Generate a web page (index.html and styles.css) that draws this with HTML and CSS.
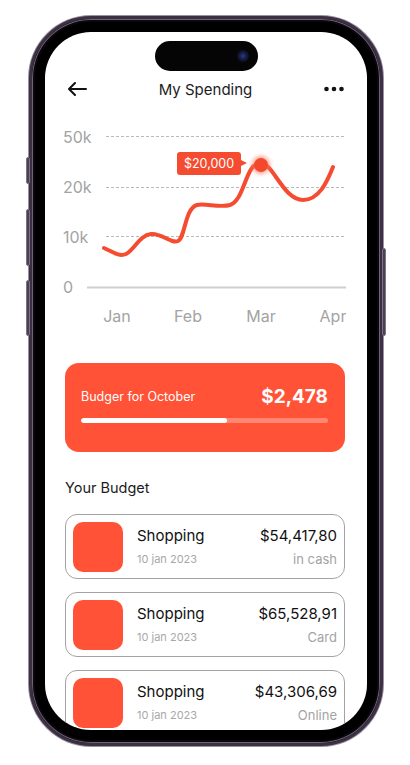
FILE: index.html
```html
<!DOCTYPE html>
<html lang="en">
<head>
<meta charset="utf-8">
<title>My Spending</title>
<link rel="stylesheet" href="styles.css">
</head>
<body>
<div class="stage">
  <div class="phone">
    <span class="btn btn-l1"></span>
    <span class="btn btn-l2"></span>
    <span class="btn btn-l3"></span>
    <span class="btn btn-r1"></span>
    <div class="screen">
      <div class="island"><span class="camera"></span></div>
      <div class="content">
        <header class="topbar">
          <svg class="icon-back" width="20" height="14" viewBox="0 0 20 14" aria-hidden="true">
            <path d="M19 7H2M8 1L2 7l6 6" fill="none" stroke="#111" stroke-width="2" stroke-linecap="round" stroke-linejoin="round"/>
          </svg>
          <h1 class="title">My Spending</h1>
          <svg class="icon-more" width="20" height="6" viewBox="0 0 20 6" aria-hidden="true">
            <circle cx="2.5" cy="3" r="2.3" fill="#111"/>
            <circle cx="10" cy="3" r="2.3" fill="#111"/>
            <circle cx="17.5" cy="3" r="2.3" fill="#111"/>
          </svg>
        </header>

        <svg class="chart" width="301" height="215" viewBox="0 0 301 215">
          <defs>
            <filter id="glow" x="-100%" y="-100%" width="300%" height="300%">
              <feGaussianBlur stdDeviation="2.2"/>
            </filter>
          </defs>
          <g class="grid">
            <line x1="61" y1="16.5" x2="301" y2="16.5"/>
            <line x1="61" y1="67.5" x2="301" y2="67.5"/>
            <line x1="61" y1="116.5" x2="301" y2="116.5"/>
          </g>
          <line class="base" x1="42" y1="167.5" x2="301" y2="167.5"/>
          <g class="ylab">
            <text x="18" y="23">50k</text>
            <text x="18" y="73">20k</text>
            <text x="18" y="123">10k</text>
            <text x="18" y="173">0</text>
          </g>
          <g class="xlab">
            <text x="72" y="202">Jan</text>
            <text x="143" y="202">Feb</text>
            <text x="216" y="202">Mar</text>
            <text x="288" y="202">Apr</text>
          </g>
          <path class="curve" d="M59,128 C68,132 74,137 81,134 C89,130 95,115 106,114 C117,113 126,124 133,121 C140,118 140,88 152,85 C160,83 175,88 185,85 C200,80 200,44 215,43 C228,42 238,80 258,80 C274,80 282,62 288,47"/>
          <circle cx="216" cy="45" r="9" fill="#ff7a62" opacity="0.7" filter="url(#glow)"/>
          <circle cx="216" cy="45" r="7" fill="#f4482d"/>
          <path class="tip" d="M135,32 H193 a3,3 0 0 1 3,3 V40 L202,43 L196,46 V52 a3,3 0 0 1 -3,3 H135 a3,3 0 0 1 -3,-3 V35 a3,3 0 0 1 3,-3 Z"/>
          <text class="tiptext" x="164" y="48">$20,000</text>
        </svg>

        <section class="budget-card">
          <div class="budget-row">
            <span class="budget-label">Budger for October</span>
            <span class="budget-amount">$2,478</span>
          </div>
          <div class="bar"><div class="bar-fill" style="width:59%"></div></div>
        </section>

        <h2 class="section-title">Your Budget</h2>

        <ul class="list">
          <li class="item">
            <span class="thumb"></span>
            <div class="item-body">
              <div class="item-row">
                <span class="item-name">Shopping</span>
                <span class="item-amount">$54,417,80</span>
              </div>
              <div class="item-row sub">
                <span class="item-date">10 jan 2023</span>
                <span class="item-method">in cash</span>
              </div>
            </div>
          </li>
          <li class="item">
            <span class="thumb"></span>
            <div class="item-body">
              <div class="item-row">
                <span class="item-name">Shopping</span>
                <span class="item-amount">$65,528,91</span>
              </div>
              <div class="item-row sub">
                <span class="item-date">10 jan 2023</span>
                <span class="item-method">Card</span>
              </div>
            </div>
          </li>
          <li class="item">
            <span class="thumb"></span>
            <div class="item-body">
              <div class="item-row">
                <span class="item-name">Shopping</span>
                <span class="item-amount">$43,306,69</span>
              </div>
              <div class="item-row sub">
                <span class="item-date">10 jan 2023</span>
                <span class="item-method">Online</span>
              </div>
            </div>
          </li>
        </ul>
      </div>
    </div>
  </div>
</div>
</body>
</html>
```

FILE: styles.css
```css
* { box-sizing: border-box; }

html, body {
  margin: 0;
  padding: 0;
  background: #ffffff;
  font-family: Inter, "Noto Sans", "Liberation Sans", sans-serif;
  color: #111;
}

.stage {
  width: 410px;
  height: 765px;
  padding: 16px 0 0 29px;
  overflow: hidden;
}

.phone {
  position: relative;
  width: 354px;
  height: 730px;
  border-radius: 62px;
  background: #000;
  border: 3px solid #3b3143;
  box-shadow: 0 0 0 1px #9a90a3, inset 0 0 0 1px #6e6478, inset 0 0 0 3px #0b080d;
  padding: 13px;
}

.btn {
  position: absolute;
  width: 4px;
  background: #4a4052;
  border: 1px solid #7d7386;
  border-radius: 2px;
}
.btn-l1 { left: -6px; top: 138px; height: 27px; }
.btn-l2 { left: -6px; top: 190px; height: 57px; }
.btn-l3 { left: -6px; top: 261px; height: 56px; }
.btn-r1 { right: -6px; top: 229px; height: 88px; }

.screen {
  position: relative;
  width: 322px;
  height: 698px;
  border-radius: 46px;
  background: #fff;
  overflow: hidden;
}

.island {
  position: absolute;
  top: 9px;
  left: 110px;
  width: 103px;
  height: 30px;
  border-radius: 15px;
  background: #050505;
}
.camera {
  position: absolute;
  right: 9px;
  top: 9px;
  width: 12px;
  height: 12px;
  border-radius: 50%;
  background: radial-gradient(circle at 50% 50%, #2a3a8a 0, #18204a 35%, #0b0d1c 70%);
}

.content {
  padding: 46px 22px 0 20px;
}

.topbar {
  height: 22px;
  display: flex;
  align-items: center;
  justify-content: space-between;
  padding: 0 1px 0 2px;
}
.title {
  margin: 0;
  font-size: 15px;
  font-weight: 400;
  color: #1c1c1c;
}
.icon-back, .icon-more { display: block; }

.chart {
  display: block;
  margin: 20px 0 0 -20px;
  overflow: hidden;
  font-family: Inter, "Noto Sans", sans-serif;
}
.grid line {
  stroke: #b9b9b9;
  stroke-width: 1;
  stroke-dasharray: 3 2;
}
.base {
  stroke: #cfcfcf;
  stroke-width: 2;
}
.ylab text, .xlab text {
  font-size: 16px;
  fill: #a3a3a3;
}
.xlab text { text-anchor: middle; }
.curve {
  fill: none;
  stroke: #f54b30;
  stroke-width: 4;
  stroke-linecap: round;
  stroke-linejoin: round;
}
.tip { fill: #f54b30; }
.tiptext {
  font-size: 12.5px;
  fill: #fff;
  text-anchor: middle;
}

.budget-card {
  margin-top: 28px;
  height: 89px;
  border-radius: 14px;
  background: #ff5236;
  padding: 21px 17px 0 16px;
  color: #fff;
}
.budget-row {
  height: 24px;
  display: flex;
  align-items: center;
  justify-content: space-between;
}
.budget-label {
  font-size: 12.5px;
  font-weight: 400;
}
.budget-amount {
  font-size: 19px;
  font-weight: 700;
}
.bar {
  margin-top: 10px;
  height: 5px;
  border-radius: 3px;
  background: rgba(255, 255, 255, 0.3);
  overflow: hidden;
}
.bar-fill {
  height: 100%;
  border-radius: 3px;
  background: #fff;
}

.section-title {
  margin: 26px 0 0 0;
  font-size: 14.5px;
  line-height: 20px;
  font-weight: 400;
  color: #1c1c1c;
}

.list {
  list-style: none;
  margin: 16px 0 0 0;
  padding: 0;
  display: flex;
  flex-direction: column;
  gap: 13px;
}
.item {
  height: 65px;
  border: 1px solid #a3a3a3;
  border-radius: 12px;
  padding: 7px;
  display: flex;
  align-items: center;
  gap: 14px;
}
.thumb {
  flex: none;
  width: 50px;
  height: 50px;
  border-radius: 10px;
  background: #ff5236;
}
.item-body {
  flex: 1;
  display: flex;
  flex-direction: column;
  gap: 4px;
}
.item-row {
  display: flex;
  justify-content: space-between;
  align-items: center;
  height: 20px;
}
.item-row.sub { height: 18px; }
.item-name, .item-amount {
  font-size: 15px;
  font-weight: 400;
  color: #111;
}
.item-date {
  font-size: 11px;
  color: #a8a8a8;
}
.item-method {
  font-size: 13px;
  color: #a3a3a3;
}
```
